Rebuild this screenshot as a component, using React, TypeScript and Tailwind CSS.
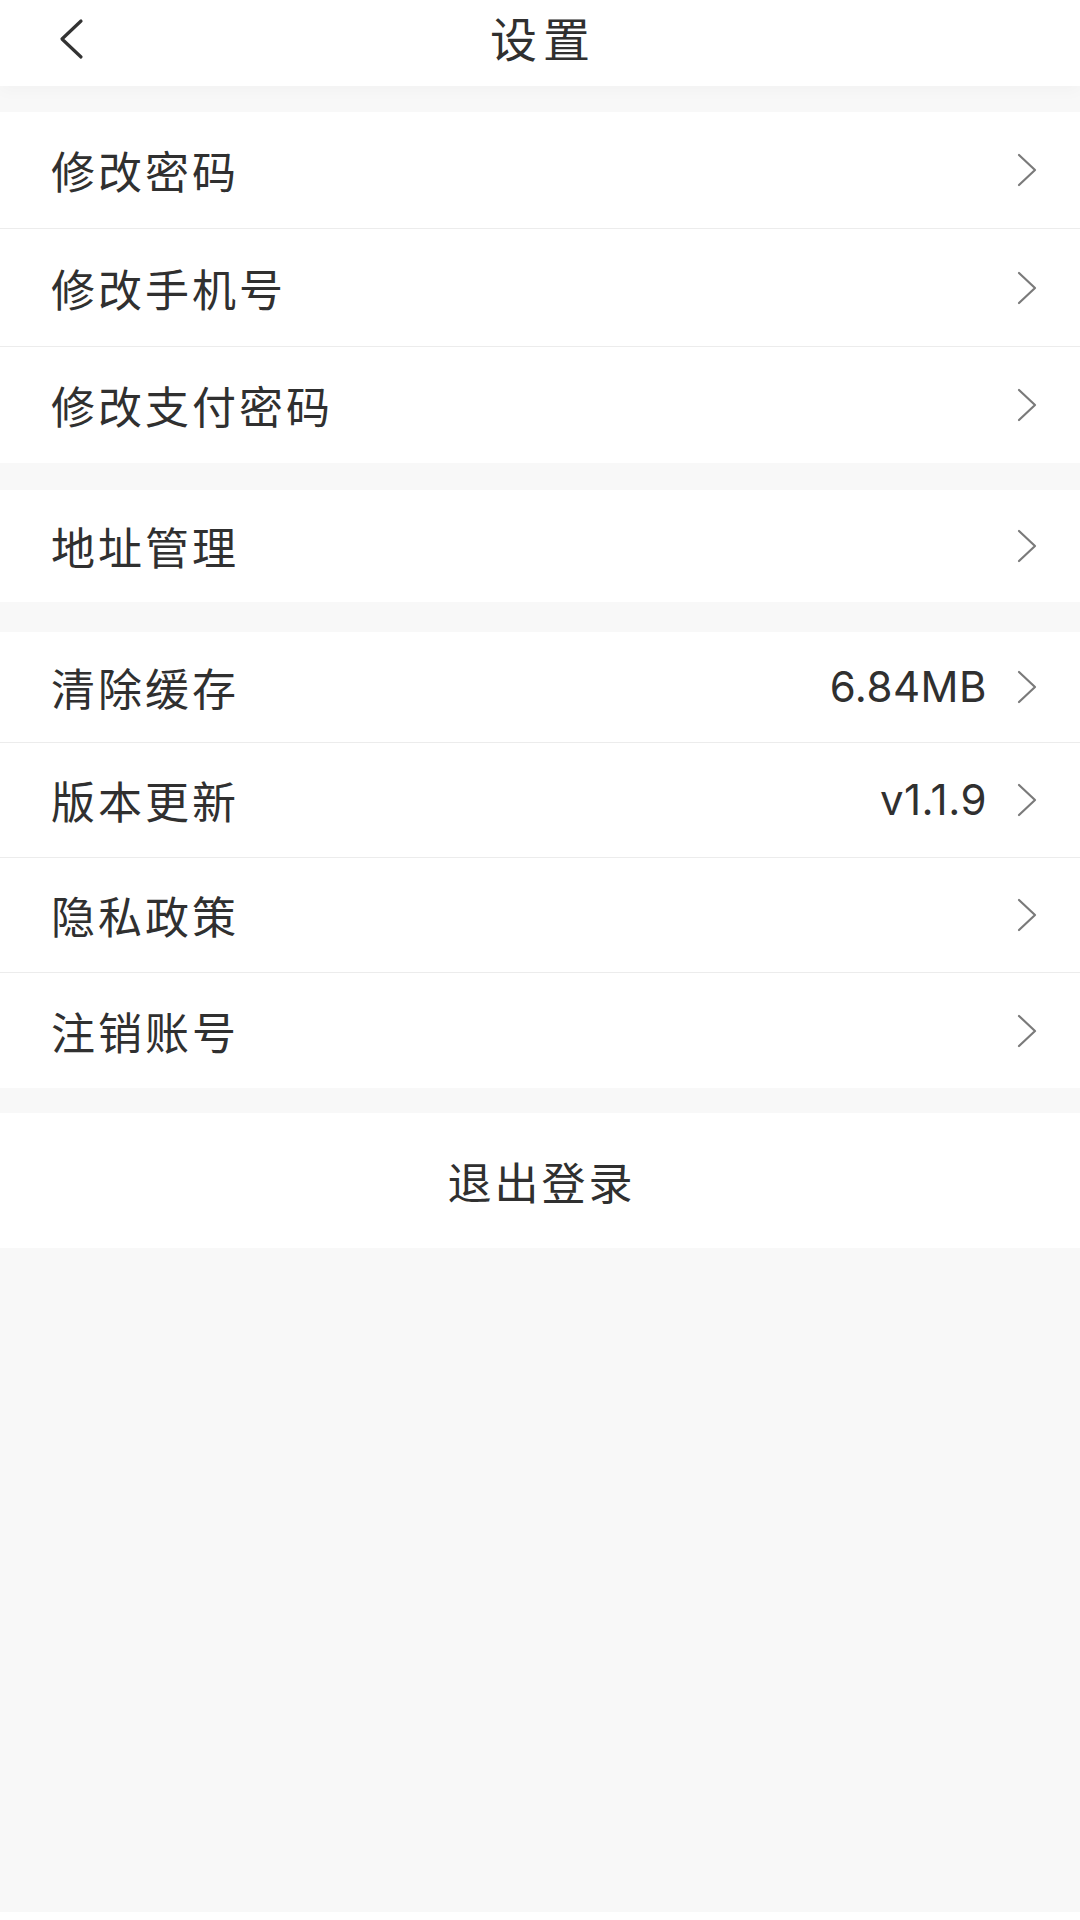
import React from "react";

type Row = { label: string; value?: string; h: string };

const cjk = { fontFamily: '"Noto Sans CJK SC", "Noto Sans", sans-serif' };
const num = { fontFamily: 'Inter, "Noto Sans", sans-serif' };

function Chevron() {
  return (
    <svg width="22" height="34" viewBox="0 0 22 34" fill="none" className="shrink-0">
      <path d="M3 2 L19 17 L3 32" stroke="#7a7a7a" strokeWidth="2.2" strokeLinecap="round" strokeLinejoin="round" />
    </svg>
  );
}

function SettingRow({ row, last }: { row: Row; last?: boolean }) {
  return (
    <div className={`flex items-center bg-white pl-[51px] pr-[42px] ${row.h} ${last ? "" : "border-b border-[#ececec]"}`}>
      <span className="flex-1 text-[44px] leading-none tracking-[3px] text-[#303030]" style={cjk}>
        {row.label}
      </span>
      {row.value && (
        <span className="mr-[29px] text-[42px] leading-none tracking-[0.5px] text-[#303030]" style={num}>
          {row.value}
        </span>
      )}
      <Chevron />
    </div>
  );
}

const groups: Row[][] = [
  [
    { label: "修改密码", h: "h-[117px]" },
    { label: "修改手机号", h: "h-[118px]" },
    { label: "修改支付密码", h: "h-[116px]" },
  ],
  [{ label: "地址管理", h: "h-[112px]" }],
  [
    { label: "清除缓存", value: "6.84MB", h: "h-[111px]" },
    { label: "版本更新", value: "v1.1.9", h: "h-[115px]" },
    { label: "隐私政策", h: "h-[115px]" },
    { label: "注销账号", h: "h-[115px]" },
  ],
];

export default function App() {
  return (
    <div className="flex min-h-[1920px] w-[1080px] flex-col bg-[#f8f8f8]">
      {/* header */}
      <div className="relative flex h-[86px] items-center justify-center bg-white shadow-[0_6px_14px_rgba(0,0,0,0.025)]">
        <button className="absolute left-[52px] top-[14px] p-1">
          <svg width="30" height="42" viewBox="0 0 30 42" fill="none">
            <path d="M25 3 L6 21 L25 39" stroke="#333333" strokeWidth="3.2" strokeLinecap="round" strokeLinejoin="round" />
          </svg>
        </button>
        <h1 className="mb-[14px] pl-[6px] text-[47px] font-normal leading-none tracking-[6px] text-[#303030]" style={cjk}>
          设置
        </h1>
      </div>

      <div className="mt-[26px] flex flex-col">
        {groups[0].map((r, i) => (
          <SettingRow key={r.label} row={r} last={i === groups[0].length - 1} />
        ))}
      </div>

      <div className="mt-[27px] flex flex-col">
        {groups[1].map((r) => (
          <SettingRow key={r.label} row={r} last />
        ))}
      </div>

      <div className="mt-[30px] flex flex-col">
        {groups[2].map((r, i) => (
          <SettingRow key={r.label} row={r} last={i === groups[2].length - 1} />
        ))}
      </div>

      <button className="mt-[25px] flex h-[135px] items-center justify-center bg-white">
        <span className="pl-[3px] text-[44px] leading-none tracking-[3px] text-[#303030]" style={cjk}>
          退出登录
        </span>
      </button>

      <div className="flex-1" />
      <div className="h-[8px] bg-white" />
    </div>
  );
}
